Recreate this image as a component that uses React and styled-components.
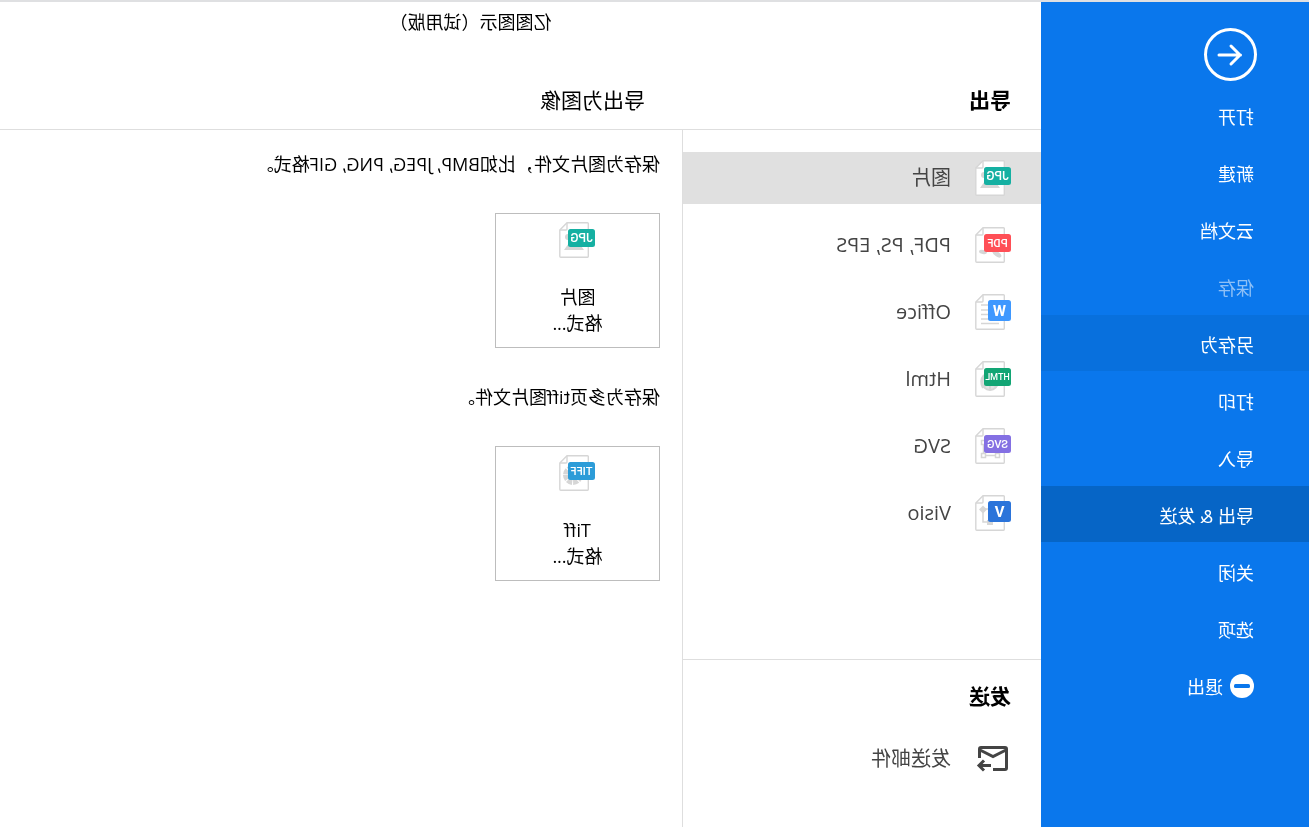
import React from 'react'
import styled, { createGlobalStyle } from 'styled-components';


const menu = [
  { label: "打开" },
  { label: "新建" },
  { label: "云文档" },
  { label: "保存", disabled: true },
  { label: "另存为", tone: "#0870dd" },
  { label: "打印" },
  { label: "导入" },
  { label: "导出 & 发送", tone: "#0665c6" },
  { label: "关闭" },
  { label: "选项" },
]

const formats = [
  { type: "JPG", label: "图片" },
  { type: "PDF", label: "PDF, PS, EPS" },
  { type: "W", label: "Office" },
  { type: "HTML", label: "Html" },
  { type: "SVG", label: "SVG" },
  { type: "V", label: "Visio" },
]

const exportsList = [
  { type: "JPG", hint: "保存为图片文件，比如BMP, JPEG, PNG, GIF格式。", label: "图片" },
  { type: "TIFF", hint: "保存为多页tiff图片文件。", label: "Tiff" },
]

const badges = {
  JPG: { color: "#15b0a2", size: 12 },
  PDF: { color: "#ff4f56", size: 11 },
  W: { color: "#3e98ff", size: 15 },
  HTML: { color: "#12a574", size: 9 },
  SVG: { color: "#8470e3", size: 11 },
  V: { color: "#2b74da", size: 15 },
  TIFF: { color: "#2c9cd8", size: 11 },
}

const GlobalStyle = createGlobalStyle`
  * {
    box-sizing: border-box;
  }

  body {
    margin: 0;
    background: #fff;
    color: #000;
    font-family: "Open Sans", "Noto Sans CJK SC", sans-serif;
    font-size: 18px;
  }

  button {
    font: inherit;
    color: inherit;
    background: none;
    border: 0;
    padding: 0;
    cursor: pointer;
  }
`;

//the whole window is shown mirrored
const Page = styled.div`
  min-height: 100vh;
  display: flex;
  border-top: 2px solid #dfe0e2;
  transform: scaleX(-1);
`;

const Sidebar = styled.aside`
  width: 268px;
  flex-shrink: 0;
  padding-top: 26px;
  background: #0a77ec;
  color: #fff;
`;

const BackButton = styled.button`
  display: block;
  margin: 0 0 6px 52px;

  svg {
    display: block;
  }
`;

const Menu = styled.nav`
  display: flex;
  flex-direction: column;
  gap: 1px;
`;

const MenuItem = styled.button`
  height: 56px;
  padding: 1px 0 0 55px;
  display: flex;
  align-items: center;
  gap: 7px;
  background: ${(props) => props.$tone || "transparent"};

  &:disabled {
    color: #8fc0f6;
    cursor: default;
  }
`;

const Main = styled.main`
  flex: 1;
  min-width: 0;
  display: flex;
  flex-direction: column;
`;

const TitleBar = styled.header`
  height: 42px;
  padding-left: 100px;
  line-height: 40px;
  text-align: center;
`;

const Heads = styled.div`
  display: flex;
  padding: 41px 0 14px;
  border-bottom: 1px solid #dedede;
`;

const Heading = styled.h2`
  margin: 0;
  padding-left: 30px;
  width: ${(props) => (props.$wide ? "359px" : "auto")};
  font-size: 21px;
  line-height: 30px;
  font-weight: ${(props) => (props.$bold ? 700 : 400)};
`;

const SubHeading = styled(Heading)`
  padding-left: 37px;
`;

const Columns = styled.div`
  flex: 1;
  display: flex;
`;

const Middle = styled.div`
  width: 359px;
  flex-shrink: 0;
  border-right: 1px solid #dedede;
`;

const List = styled.div`
  display: flex;
  flex-direction: column;
  gap: 15px;
  padding: 22px 0 120px;
`;

const ListItem = styled.button`
  width: 100%;
  height: 52px;
  padding-left: 30px;
  display: flex;
  align-items: center;
  gap: 24px;
  font-size: 20px;
  line-height: 26px;
  color: #444;
  background: ${(props) => (props.$active ? "#e0e0e0" : "transparent")};
`;

const Send = styled.section`
  padding-top: 21px;
  border-top: 1px solid #dedede;

  ${ListItem} {
    margin-top: 22px;
  }
`;

const Right = styled.div`
  flex: 1;
  padding: 20px 22px;
`;

const Hint = styled.p`
  margin: 0 0 35px;
  line-height: 28px;
`;

const Card = styled.button`
  width: 165px;
  height: 135px;
  margin-bottom: 35px;
  padding-top: 8px;
  display: flex;
  flex-direction: column;
  align-items: center;
  border: 1px solid #bdbdbd;
  line-height: 26px;

  svg {
    margin-bottom: 26px;
  }
`;

const Art = ({ type }) => {
  if (type === "JPG") return (
    <g fill="#d6d6d6">
      <circle cx="27" cy="15" r="3" />
      <path d="M11 28 L16 21 L19 24 L24 18 L31 28Z" />
    </g>
  )
  if (type === "PDF") return (
    <g fill="#d6d6d6">
      <ellipse cx="14" cy="27" rx="5" ry="2.4" transform="rotate(-35 14 27)" />
      <ellipse cx="28" cy="25" rx="4" ry="2" transform="rotate(-10 28 25)" />
    </g>
  )
  if (type === "W") return (
    <path d="M22 11H30M22 16H30M22 20.5H30M12 25H30M12 29.5H30" stroke="#d6d6d6" strokeWidth="1.5" />
  )
  if (type === "HTML") return (
    <g fill="none" stroke="#d6d6d6" strokeWidth="2">
      <circle cx="21" cy="21" r="8" fill="#e4e4e4" />
      <path d="M14 26 Q21 21 28 26M21 13V29M27 14Q32 20 28 27" />
    </g>
  )
  if (type === "SVG") return (
    <g fill="none" stroke="#d6d6d6" strokeWidth="1.5">
      <path d="M14 16V25M27.500 16V25M16 27.500H25M17 14H24" />
      <rect x="11.5" y="25.5" width="4" height="4" />
      <rect x="25.5" y="25.5" width="4" height="4" />
      <rect x="25.5" y="12.5" width="4" height="4" />
    </g>
  )
  if (type === "V") return (
    <g>
      <path d="M22 14H28V27H22" fill="none" stroke="#d6d6d6" strokeWidth="1.5" />
      <path d="M28 10.5L32 14.5L28 18.5L24 14.5Z M18 25H24V30H18Z" fill="#d6d6d6" />
    </g>
  )
  return (
    <circle cx="22" cy="20" r="7.5" fill="none" stroke="#d6d6d6" strokeWidth="5" strokeDasharray="4.9 1" />
  )
}

const FileIcon = ({ type }) => {
  const { color, size } = badges[type]
  const square = type.length === 1
  const width = square ? 23 : 27
  return (
    <svg width="36" height="36" viewBox="0 0 36 36" aria-hidden="true">
      <path d="M7.5 .8H28L35.2 8V34.2Q35.2 35.2 34.2 35.2H7.5Q6.7 35.2 6.7 34.2V1.6Q6.7 .8 7.5 .8Z" fill="#fff" stroke="#d6d6d6" strokeWidth="1.4" />
      <path d="M28 1V7Q28 8 29 8H35" fill="none" stroke="#d6d6d6" strokeWidth="1.4" />
      <Art type={type} />
      <rect x="0" y={square ? 6 : 7} width={width} height={square ? 21 : 18} rx="2.5" fill={color} />
      <text
        x={width / 2}
        y={square ? 22 : size === 9 ? 19 : 20}
        fill="#fff"
        fontFamily="Roboto, sans-serif"
        fontWeight={square ? 700 : 500}
        fontSize={size}
        textAnchor="middle"
      >
        {type}
      </text>
    </svg>
  )
}

const MailIcon = () => (
  <svg width="36" height="36" viewBox="0 0 36 36" fill="none" stroke="#444" strokeWidth="3" aria-hidden="true">
    <path d="M18 28.5H6Q4.5 28.5 4.5 27V8Q4.5 6.5 6 6.5H30Q31.5 6.5 31.5 8V17" />
    <path d="M5 9L18 15.5L31 9" />
    <path d="M20 24.5H31M27 19.5L32 24.5L27 29.5" />
  </svg>
)

const App = () => {
  const [active, setActive] = React.useState("JPG")
  return (
    <>
      <GlobalStyle />
      <Page>
        <Sidebar>
          <BackButton aria-label="返回">
            <svg width="53" height="53" viewBox="0 0 53 53" fill="none" stroke="#fff" strokeWidth="3">
              <circle cx="26.5" cy="26.5" r="25" />
              <path d="M38 27H16.500M26 18L17 27L26 36" strokeLinecap="round" strokeLinejoin="round" />
            </svg>
          </BackButton>
          <Menu>
            {menu.map((item) => (
              <MenuItem key={item.label} disabled={item.disabled} $tone={item.tone}>
                {item.label}
              </MenuItem>
            ))}
            <MenuItem>
              <svg width="24" height="24" viewBox="0 0 24 24" aria-hidden="true">
                <circle cx="12" cy="12" r="12" fill="#fff" />
                <rect x="4" y="10" width="16" height="4" rx="1.5" fill="#0a77ec" />
              </svg>
              退出
            </MenuItem>
          </Menu>
        </Sidebar>
        <Main>
          <TitleBar>亿图图示（试用版）</TitleBar>
          <Heads>
            <Heading $wide $bold>导出</Heading>
            <SubHeading>导出为图像</SubHeading>
          </Heads>
          <Columns>
            <Middle>
              <List>
                {formats.map((item) => (
                  <ListItem key={item.type} $active={active === item.type} onClick={() => setActive(item.type)}>
                    <FileIcon type={item.type} />
                    {item.label}
                  </ListItem>
                ))}
              </List>
              <Send>
                <Heading $bold>发送</Heading>
                <ListItem>
                  <MailIcon />
                  发送邮件
                </ListItem>
              </Send>
            </Middle>
            <Right>
              {exportsList.map((item) => (
                <div key={item.type}>
                  <Hint>{item.hint}</Hint>
                  <Card>
                    <FileIcon type={item.type} />
                    <span>{item.label}</span>
                    <span>格式...</span>
                  </Card>
                </div>
              ))}
            </Right>
          </Columns>
        </Main>
      </Page>
    </>
  )
}

export default App
